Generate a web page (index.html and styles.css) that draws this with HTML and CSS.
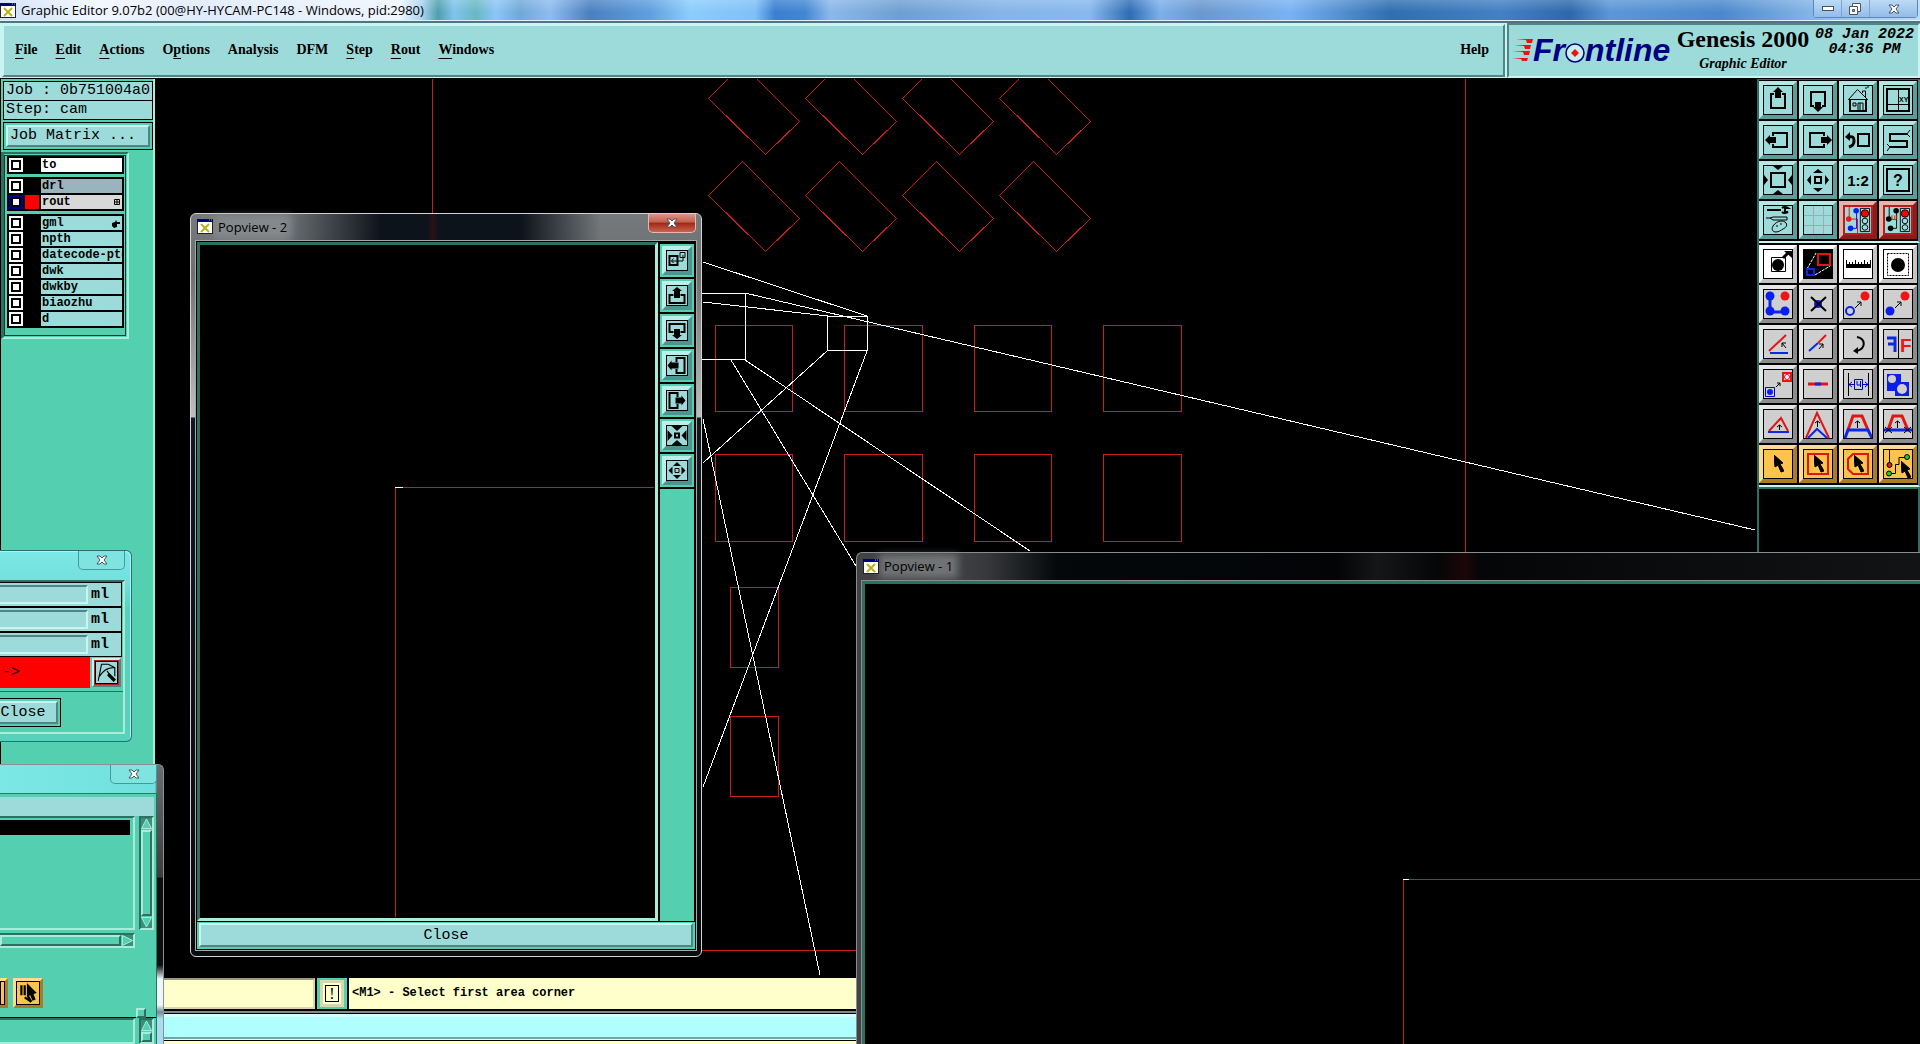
FILE: index.html
```html
<!DOCTYPE html>
<html lang="en">
<head>
  <meta charset="UTF-8">
  <title>Graphic Editor 9.07b2</title>
  <meta name="viewport" content="width=device-width, initial-scale=1.0">
  <link rel="stylesheet" href="styles.css">
</head>
<body>
  <!-- shared shapes -->
  <svg class="defs" aria-hidden="true">
    <symbol id="x-app" viewBox="0 0 16 15">
      <rect width="16" height="15" fill="#222"/>
      <rect x="1" y="0" width="14" height="14" fill="#fff"/>
      <rect x="0" y="0" width="16" height="3" fill="#00007c"/>
      <path d="M12 1h1M14 1h1" stroke="#9ab"/>
      <path d="M4 5l8 8M12 5l-8 8" stroke="#b9b319" stroke-width="2"/>
    </symbol>
    <symbol id="x-close" viewBox="0 0 12 10">
      <path d="M1 1h3l2 2 2-2h3l-3 4 3 4H8L6 7 4 9H1l3-4z" fill="#fff" stroke="#4a5560"/>
    </symbol>
    <symbol id="cursor" viewBox="0 0 10 18">
      <path d="M0 0l9 8-3 1 4 7-3 1-3-7-3 2z" fill="#000"/>
    </symbol>
  </svg>

  <header class="titlebar">
    <svg class="app-icon"><use href="#x-app"/></svg>
    <h1>Graphic Editor 9.07b2 (00@HY-HYCAM-PC148 - Windows, pid:2980)</h1>
    <div class="window-buttons">
      <button aria-label="Minimize"><svg width="12" height="6" viewBox="0 0 12 6"><rect x=".5" y=".5" width="11" height="4" fill="#fff" stroke="#4a5560"/></svg></button>
      <button aria-label="Restore"><svg width="13" height="12" viewBox="0 0 13 12"><path d="M3.500.5h8v8h-8z" fill="#fff" stroke="#4a5560"/><path d="M.5 3.500h8v8h-8z" fill="#fff" stroke="#4a5560"/><path d="M3.500 6.500h2v2h-2z" fill="#7aa5d6" stroke="#4a5560"/></svg></button>
      <button aria-label="Close" class="wide"><svg width="12" height="10"><use href="#x-close"/></svg></button>
    </div>
  </header>

  <div class="top">
    <nav class="menubar">
      <button><u>F</u>ile</button>
      <button><u>E</u>dit</button>
      <button><u>A</u>ctions</button>
      <button>O<u>p</u>tions</button>
      <button>Analysis</button>
      <button>DFM</button>
      <button><u>S</u>tep</button>
      <button><u>R</u>out</button>
      <button><u>W</u>indows</button>
      <button class="help">Help</button>
    </nav>
    <div class="brand">
      <div class="logo">
        <svg width="21" height="24" viewBox="0 0 21 24" fill="#f01010">
          <path d="M4 1h17l-1 4h-5l-1-3zM2 7h17l-1 4h-5l-1-3zM0 13h18l-1 4h-5l-1-3zM0 20h16l-1 3h-5l-1-2z"/>
        </svg>
        <span>Fr</span>
        <svg class="ring" width="20" height="20" viewBox="0 0 20 20">
          <circle cx="10" cy="10" r="9" fill="#c4f0ee" stroke="#00007c" stroke-width="1.500"/>
          <path d="M10 6l4 4-4 4-4-4z" fill="#f01010"/>
        </svg>
        <span>ntline</span>
      </div>
      <div class="product">
        <strong>Genesis 2000</strong>
        <em>Graphic Editor</em>
      </div>
      <div class="clock"><span>08 Jan 2022</span><span>04:36 PM</span></div>
    </div>
  </div>

  <main>
    <aside class="layers">
      <div class="job">
        <div>Job : 0b751004a0</div>
        <div>Step: cam</div>
      </div>
      <div class="matrix"><button>Job Matrix ...</button></div>
      <div class="layer-list">
        <div class="layer-group">
          <label class="layer white"><input type="checkbox"><i></i><span>to</span></label>
        </div>
        <div class="layer-group">
          <label class="layer gray"><input type="checkbox"><i></i><span>drl</span></label>
          <label class="layer silver"><input type="checkbox" checked><i></i><span>rout</span>
            <svg width="6" height="6" viewBox="0 0 6 6"><path d="M.5.5h5v5h-5zM3 0v6M0 3h6" fill="none" stroke="#000"/></svg></label>
        </div>
        <div class="layer-group">
          <label class="layer"><input type="checkbox"><i></i><span>gml</span>
            <svg width="8" height="8" viewBox="0 0 8 8"><path d="M0 3l3-1 1-2 1 2h3v2H5v3l-3 1-2-2z"/></svg></label>
          <label class="layer"><input type="checkbox"><i></i><span>npth</span></label>
          <label class="layer"><input type="checkbox"><i></i><span>datecode-pto</span></label>
          <label class="layer"><input type="checkbox"><i></i><span>dwk</span></label>
          <label class="layer"><input type="checkbox"><i></i><span>dwkby</span></label>
          <label class="layer"><input type="checkbox"><i></i><span>biaozhu</span></label>
          <label class="layer"><input type="checkbox"><i></i><span>d</span></label>
        </div>
      </div>
    </aside>

    <section class="canvas">
      <svg width="1602" height="899" viewBox="155 79 1602 899" fill="none" shape-rendering="crispEdges">
        <defs>
          <path id="slot" d="M708.500 98.500L742.500 64.500L799.500 121.500L765.500 154.500z"/>
          <g id="slots"><use href="#slot"/><use href="#slot" x="97"/><use href="#slot" x="194"/><use href="#slot" x="291"/></g>
        </defs>
        <g stroke="#c81e1e">
          <path d="M432.500 79V950.500H1465.500V79"/>
          <use href="#slots"/>
          <use href="#slots" y="97"/>
          <path d="M715.500 325.500h77v86h-77zM844.500 325.500h78v86h-78zM974.500 325.500h77v86h-77zM1103.500 325.500h78v86h-78z"/>
          <path d="M715.500 454.500h77v87h-77zM844.500 454.500h78v87h-78zM974.500 454.500h77v87h-77zM1103.500 454.500h78v87h-78z"/>
          <path d="M730.500 587.500h48v80h-48zM730.500 716.500h48v80h-48z"/>
        </g>
        <g stroke="#fff">
          <path d="M690 293.500H745.500V359.500H690M827.500 316.500h40v34h-40z"/>
          <path d="M703 262L867 316M703 302L828 316M745 293L1755 530"/>
          <path d="M745 360L1030 551M731 360L856 566M827 351L703 463M867 351L703 787M703 419L820 975"/>
        </g>
      </svg>
    </section>

    <aside class="toolbox">
      <div class="tools">
        <button aria-label="Pan up"><svg viewBox="0 0 28 28"><path d="M10 8H7v14h14V8h-3" class="w2"/><path d="M14 1l5 5h-2v6h-6V6H9z" class="f"/></svg></button>
        <button aria-label="Pan down"><svg viewBox="0 0 28 28"><path d="M10 20H7V6h14v14h-3" class="w2"/><path d="M14 26l5-5h-2v-5h-6v5H9z" class="f"/></svg></button>
        <button aria-label="Home"><svg viewBox="0 0 28 28"><path d="M4.500 13.500l9-10 10 10z M18.500 7V5h3v6M9 17h3v3H9zM14 25v-8h5v8M16 17v8"/><path d="M6 13v12h16V13" class="w2"/><path d="M22 1v2M24 0v2"/></svg></button>
        <button aria-label="Snap"><svg viewBox="0 0 28 28"><path d="M3 3h22v22H3z" class="w2"/><path d="M14.500 3v22M3 18.500h22"/><text x="15" y="16" font-size="7">XY</text></svg></button>
        <button aria-label="Pan left"><svg viewBox="0 0 28 28"><path d="M9 10V7h14v14H9v-3" class="w2"/><path d="M1 14l5-5v2h6v6H6v2z" class="f"/></svg></button>
        <button aria-label="Pan right"><svg viewBox="0 0 28 28"><path d="M20 10V7H6v14h14v-3" class="w2"/><path d="M28 14l-5-5v2h-6v6h6v2z" class="f"/></svg></button>
        <button aria-label="Previous view"><svg viewBox="0 0 28 28"><path d="M14 8h11v12H14z" class="w2"/><path d="M4 11c5-1 6 0 6 4s-2 5-5 6" class="w3"/><path d="M1 11l5-5v9z" class="f"/></svg></button>
        <button aria-label="Serpentine"><svg viewBox="0 0 28 28"><path d="M23 8H6v7h17v6H6" class="w2"/><path d="M26 4l-3 4 3 3M3 18l3 3-3 4"/></svg></button>
        <button aria-label="Zoom in"><svg viewBox="0 0 28 28"><path d="M7 7h14v14H7z" class="w2"/><path d="M9 0h10l-5 4zM9 28h10l-5-4zM0 9v10l4-5zM28 9v10l-4-5z" class="f"/></svg></button>
        <button aria-label="Zoom out"><svg viewBox="0 0 28 28"><path d="M11 11h6v6h-6z" class="w2"/><path d="M14 3l5 4H9zM14 26l5-4H9zM3 14l4-5v10zM25 14l-4-5v10z" class="f"/></svg></button>
        <button aria-label="One to two"><svg viewBox="0 0 28 28"><text x="14" y="20" font-size="15" text-anchor="middle">1:2</text></svg></button>
        <button aria-label="Query"><svg viewBox="0 0 28 28"><path d="M3 3h22v22H3z" class="w2"/><text x="14" y="20" font-size="16" text-anchor="middle">?</text></svg></button>
        <button aria-label="Settings"><svg viewBox="0 0 28 28"><path d="M3 4h14M18 2c3-2 6 0 6 0h-3v4h3s-4 2-6 0" class="w2"/><path d="M2 12h4l3-1h14v3H9l-3-2M9 20c4-6 11-6 13-3s-1 5-3 6-4 3-7 3-5-2-3-6zM12 20h2M16 18h2"/></svg></button>
        <button aria-label="Grid"><svg viewBox="0 0 28 28"><path d="M9.500 0v28M19.500 0v28M0 9.500h28M0 19.500h28" stroke="#a3a9ae"/></svg></button>
        <button aria-label="Net color" class="alert"><svg viewBox="0 0 28 28"><path d="M16.500 1.500h10v25h-10z"/><circle cx="21.500" cy="7" r="4" fill="#f00"/><circle cx="21.500" cy="15" r="3"/><circle cx="21.500" cy="22" r="3"/><path d="M4.500 0v13h9v15" stroke="#f00"/><circle cx="4" cy="13" r="3" class="red"/><path d="M12.500 4v19H6" stroke="#00f"/><circle cx="12" cy="4" r="3" class="blue"/><circle cx="6" cy="23" r="3" class="blue"/></svg></button>
        <button aria-label="Net check" class="alert"><svg viewBox="0 0 28 28"><path d="M16.500 1.500h10v25h-10z"/><circle cx="21.500" cy="7" r="4" fill="#f00"/><circle cx="21.500" cy="15" r="3"/><circle cx="21.500" cy="22" r="3"/><path d="M4.500 0v13M12.500 4v19H6"/><path d="M5 13.500h7M7.500 9v4M10.500 9v4M12.500 9v4" stroke="#f00"/><circle cx="4" cy="13" r="3" class="f"/><circle cx="12" cy="4" r="3" class="f"/><circle cx="6" cy="23" r="3" class="f"/></svg></button>
      </div>
      <div class="tools edit">
        <button aria-label="Move" class="paper"><svg viewBox="0 0 28 28"><path d="M7.500 7.500h14v14h-14z"/><circle cx="14" cy="15" r="6" class="f"/><path d="M19 8l5-5" class="w3"/><path d="M20 1h8v7z" class="f"/></svg></button>
        <button aria-label="Popview" class="paper dark"><svg viewBox="0 0 28 28"><path d="M3 19l9-16M11 25l15-9" stroke="#fff" stroke-dasharray="3 1"/><path d="M14 4h12v11H14z" class="w2 sr"/><path d="M3 19h7v6H3z" class="w2 sb"/></svg></button>
        <button aria-label="Measure" class="paper"><svg viewBox="0 0 28 28"><path d="M2 14h25v4H2z" class="f"/><path d="M2.500 10v5M5.500 12v3M8.500 12v3M11.500 10v5M14.500 12v3M17.500 12v3M20.500 10v5M23.500 12v3M26.500 10v5"/></svg></button>
        <button aria-label="Select feature" class="paper"><svg viewBox="0 0 28 28"><path d="M3.500 3.500h21v22h-21z" stroke-dasharray="2 1"/><circle cx="14" cy="15" r="7" class="f"/></svg></button>
        <button aria-label="Add polyline"><svg viewBox="0 0 28 28"><path d="M6 6v16h15" class="w3 sb"/><circle cx="6" cy="6" r="4.500" class="blue"/><circle cx="6" cy="21" r="4.500" class="blue"/><circle cx="21" cy="21" r="4.500" class="blue"/><circle cx="21" cy="6" r="4.500" class="red"/></svg></button>
        <button aria-label="Delete"><svg viewBox="0 0 28 28"><circle cx="14" cy="14" r="4" class="blue"/><path d="M7 7l15 14M22 7L7 21" class="w2"/></svg></button>
        <button aria-label="Copy to"><svg viewBox="0 0 28 28"><circle cx="6" cy="21" r="4" class="w2 sb"/><circle cx="21" cy="6" r="4.500" class="red"/><path d="M11 18l6-6M13 12h4v4"/></svg></button>
        <button aria-label="Move to"><svg viewBox="0 0 28 28"><circle cx="6" cy="21" r="4.500" class="blue"/><circle cx="21" cy="6" r="4.500" class="red"/><path d="M11 18l6-6M13 12h4v4"/></svg></button>
        <button aria-label="Rotate"><svg viewBox="0 0 28 28"><path d="M5 21L22 5" class="w2 sr"/><path d="M6 23h18" class="w2 sb"/><path d="M22 18l-4-5M18 17v-4h4"/></svg></button>
        <button aria-label="Stretch line"><svg viewBox="0 0 28 28"><path d="M5 21l9-8" class="w2 sb"/><path d="M14 13l8-8" class="w2 sr"/><path d="M15 19l4-5M15 14h4v4"/></svg></button>
        <button aria-label="Turn"><svg viewBox="0 0 28 28"><path d="M13 7c9 2 9 11 0 14" class="w2"/><path d="M9 21l5-4v7z" class="f"/></svg></button>
        <button aria-label="Mirror"><svg viewBox="0 0 28 28"><path d="M14.500 0v28"/><path d="M3 8h8v14M4 14h7" class="w3 sb"/><text x="16" y="22" font-size="19" class="red">F</text></svg></button>
        <button aria-label="Transform"><svg viewBox="0 0 28 28"><path d="M1.500 17.500h9v9h-9z" stroke="#00c"/><circle cx="6" cy="22" r="3" class="blue"/><path d="M19 3h8v8h-8z" fill="#e8d8d8" class="sr w2"/><circle cx="23" cy="7" r="2.500" fill="#fff" stroke="#e41414"/><path d="M12 17l4-4M13 13h3v3"/></svg></button>
        <button aria-label="Break line"><svg viewBox="0 0 28 28"><path d="M4 14h20" class="w3 sr"/><path d="M11 14h6" class="w3 sb"/></svg></button>
        <button aria-label="Spacing"><svg viewBox="0 0 28 28"><path d="M4.500 3v23M24.500 3v23"/><path d="M10.500 9.500h8v10h-8zM10 14.500H5M8 12l-3 2.500 3 2.500M19 14.500h5M21 12l3 2.500-3 2.500M13 11v4h4M16.500 11v6" stroke="#00c"/></svg></button>
        <button aria-label="Merge"><svg viewBox="0 0 28 28"><path d="M3 4h14v8h8v14H11v-5H3z" class="blue"/><circle cx="8" cy="9" r="4" fill="#cfcfcf" stroke="none"/><circle cx="18" cy="19" r="5" fill="#cfcfcf" stroke="none"/></svg></button>
        <button aria-label="Arc"><svg viewBox="0 0 28 28"><path d="M5 21L17 8l7 13" class="w2 sr"/><path d="M4 22h21" class="w2 sb"/><path d="M15.500 20v-5M13 17l2.500-2 2.500 2"/></svg></button>
        <button aria-label="Raise corner"><svg viewBox="0 0 28 28"><path d="M2 28L13 3l12 25" class="w2 sr"/><path d="M4 28l9-9 10 9" class="w2 sb"/><path d="M13.500 17v-6M11 13l2.500-2 2.500 2"/></svg></button>
        <button aria-label="Raise edge"><svg viewBox="0 0 28 28"><path d="M4 20L9 6h9l6 14" class="w3 sr"/><path d="M1 28l3-8h20l4 8" class="w3 sb"/><path d="M13.500 18v-7M11 13l2.500-2 2.500 2"/></svg></button>
        <button aria-label="Raise cut"><svg viewBox="0 0 28 28"><path d="M4 20L9 6h9l6 14" class="w3 sr"/><path d="M0 20h28" class="w3 sb"/><path d="M1 17l7 6M8 17l-7 6M20 17l7 6M27 17l-7 6M13.500 18v-7M11 13l2.500-2 2.500 2"/></svg></button>
        <button aria-label="Select" class="gold"><svg viewBox="0 0 28 28"><use href="#cursor" x="10" y="5" width="10" height="18"/></svg></button>
        <button aria-label="Select in frame" class="gold"><svg viewBox="0 0 28 28"><path d="M4 4h20v20H4z" class="w2 sr"/><use href="#cursor" x="10" y="5" width="10" height="18"/></svg></button>
        <button aria-label="Select in polygon" class="gold"><svg viewBox="0 0 28 28"><path d="M9 4h15v20H9l-5-5V9z" class="w2 sr"/><use href="#cursor" x="10" y="5" width="10" height="18"/></svg></button>
        <button aria-label="Select net" class="gold"><svg viewBox="0 0 28 28"><path d="M5.500 0v15M5 23.500h6.500v-9h3.500v-7h8"/><circle cx="5.500" cy="15" r="2.500" fill="#c22"/><circle cx="5" cy="23.500" r="2.500" fill="#2c2"/><circle cx="23" cy="7" r="2.500" fill="#2c2"/><use href="#cursor" x="17" y="11" width="10" height="18"/></svg></button>
      </div>
      <div class="preview"></div>
    </aside>
  </main>

  <footer>
    <div class="status">
      <input class="entry" type="text" aria-label="Command">
      <div class="bang"><button>!</button></div>
      <output>&lt;M1&gt; - Select first area corner</output>
    </div>
    <div class="strip"></div>
  </footer>

  <section class="window popview one">
    <header>
      <svg class="app-icon"><use href="#x-app"/></svg>
      <h2>Popview - 1</h2>
    </header>
    <div class="view">
      <svg width="1060" height="460" shape-rendering="crispEdges" fill="none">
        <path d="M538.500 460V295.500H1060" stroke="#c81e1e"/>
        <path d="M538 295.500h6" stroke="#fff"/>
      </svg>
    </div>
  </section>

  <section class="window popview two">
    <header>
      <svg class="app-icon"><use href="#x-app"/></svg>
      <h2>Popview - 2</h2>
      <button class="close-red" aria-label="Close window"><svg width="12" height="10"><use href="#x-close"/></svg></button>
    </header>
    <div class="pop-body">
      <div class="pop-row">
        <div class="view">
          <svg width="455" height="673" shape-rendering="crispEdges" fill="none">
            <path d="M195.500 672V242.500H454" stroke="#c81e1e"/>
            <path d="M195 242.500h8" stroke="#fff"/>
          </svg>
        </div>
        <div class="pop-tools">
          <div><button aria-label="Set window"><svg viewBox="0 0 19 19"><path d="M2 5h8v9H2z" class="w2"/><path d="M12.500 1.500h5v5h-5zM15.500 4v6H4M6 7.500L4 10l2 2"/></svg></button></div>
          <div><button aria-label="Up"><svg viewBox="0 0 19 19"><path d="M6 9H2v8h15V9h-4" class="w2"/><path d="M9.500 1l5 4h-2v7h-6V5h-2z" class="f"/></svg></button></div>
          <div><button aria-label="Down"><svg viewBox="0 0 19 19"><path d="M6 11H2V3h15v8h-4" class="w2"/><path d="M9.500 18l5-4h-2V8h-6v6h-2z" class="f"/></svg></button></div>
          <div><button aria-label="Left"><svg viewBox="0 0 19 19"><path d="M9 6V2h8v15H9v-4" class="w2"/><path d="M0 9.500l4-5v2h7v6H4v2z" class="f"/></svg></button></div>
          <div><button aria-label="Right"><svg viewBox="0 0 19 19"><path d="M10 6V2H2v15h8v-4" class="w2"/><path d="M18 9.500l-4-5v2H8v6h6v2z" class="f"/></svg></button></div>
          <div><button aria-label="In"><svg viewBox="0 0 19 19"><path d="M7.500 7.500h4v4h-4z" class="w2"/><path d="M4 0h11L9.500 5zM4 19h11l-5.500-5zM0 4v11l5-5.500zM19 4v11l-5-5.500z" class="f"/></svg></button></div>
          <div><button aria-label="Out"><svg viewBox="0 0 19 19"><path d="M7.500 7.500h4v4h-4z"/><path d="M9.500 1l4 4h-8zM9.500 18l4-4h-8zM1 9.500l4-4v8zM18 9.500l-4-4v8z" class="f"/></svg></button></div>
        </div>
      </div>
      <div class="pop-close"><button>Close</button></div>
    </div>
  </section>

  <section class="window dialog measure">
    <header><button class="close-glass" aria-label="Close window"><svg width="12" height="10"><use href="#x-close"/></svg></button></header>
    <div class="dialog-body">
      <label class="field"><input type="text"><span>ml</span></label>
      <label class="field"><input type="text"><span>ml</span></label>
      <label class="field"><input type="text"><span>ml</span></label>
      <div class="result">
        <output>-&gt;</output>
        <button aria-label="Pick"><svg viewBox="0 0 19 19"><path d="M2 17L5 2h6l6 3v8M3 13c3-4 6-8 14-8M10 8l2 3"/><path d="M11 11l6 6" class="w3"/></svg></button>
      </div>
      <div class="actions"><div><button>Close</button></div></div>
    </div>
  </section>

  <section class="window dialog list">
    <header><button class="close-glass" aria-label="Close window"><svg width="12" height="10"><use href="#x-close"/></svg></button></header>
    <div class="dialog-body">
      <div class="band"></div>
      <div class="scroller">
        <div class="listbox"><div class="selected"></div></div>
        <div class="vbar">
          <svg width="11" height="11" viewBox="0 0 11 11"><path d="M5.500 1l5 9.500H.5z"/></svg>
          <i></i>
          <svg width="11" height="11" viewBox="0 0 11 11"><path d="M.5.5h10l-5 9.500z"/></svg>
        </div>
      </div>
      <div class="hbar"><i></i><svg width="11" height="11" viewBox="0 0 11 11"><path d="M.5.5l10 5-10 5z"/></svg></div>
      <div class="gold-row">
        <button class="gold" aria-label="Select one"><svg viewBox="0 0 20 20"></svg></button>
        <button class="gold" aria-label="Select many"><svg viewBox="0 0 20 20"><path d="M4 3v9M7 3v9M7 14l6 4M10 13l3 5" class="w2"/><path d="M9 1l9 9-3 1 2 5-3 1-2-5-3 2z" class="f"/></svg></button>
      </div>
      <div class="scroller lower">
        <div class="listbox"></div>
        <div class="vbar">
          <svg width="11" height="11" viewBox="0 0 11 11"><path d="M5.500 1l5 9.500H.5z"/></svg>
          <i></i>
        </div>
      </div>
      <div class="sash"></div>
    </div>
  </section>
</body>
</html>
```
FILE: styles.css
```css
:root {
  --face: #9cdbda;
  --teal: #54cfb0;
  --teal-light: #a8ecd9;
  --teal-dark: #2f6f62;
  --light: #c8f4f2;
  --shade: #4f8584;
  --mono: "Liberation Mono", monospace;
  --ui: "Open Sans", sans-serif;
}
* {
  box-sizing: border-box;
}
body {
  margin: 0;
  height: 100vh;
  display: flex;
  flex-direction: column;
  overflow: hidden;
  position: relative;
  background: #000;
  color: #000;
  font-family: var(--mono);
}
button, input {
  font: inherit;
  color: inherit;
  margin: 0;
  padding: 0;
  border-radius: 0;
}
h1, h2 {
  margin: 0;
  font: 13px/16px var(--ui);
}
svg {
  display: block;
  flex: none;
}
.defs {
  position: absolute;
  width: 0;
  height: 0;
}
.app-icon {
  width: 16px;
  height: 15px;
}

/* icon strokes */
button svg {
  fill: none;
  stroke: #000;
  overflow: hidden;
}
button svg text {
  font-family: "Liberation Sans", sans-serif;
  font-weight: bold;
  fill: #000;
  stroke: none;
}
button svg .w2 { stroke-width: 2; }
button svg .w3 { stroke-width: 3; }
button svg .f { fill: #000; stroke: none; }
button svg .red { fill: #f01414; stroke: none; }
button svg .blue { fill: #0a1eee; stroke: none; }
button svg .sr { stroke: #e41414; }
button svg .sb { stroke: #0a28e6; }

/* main window */
.titlebar {
  height: 21px;
  display: flex;
  align-items: center;
  gap: 5px;
  border-bottom: 1px solid #dff0ff;
  background:
    linear-gradient(#ffffff30, #ffffff00 60%),
    linear-gradient(90deg, #cfe0f8 0, #f2f7fe 100px, #dfeafc 200px, #eef6fd 400px, #a9d3f0 422px, #4f9fae 438px, #7fc4ec 454px, #68b8c4 476px, #8cc6f8 496px, #6fa9d8 520px, #8ebcf0 550px, #4a80c0 590px, #5f9fe0 650px, #8ccdfc 690px, #7fc0f8 755px, #3a7fd0 775px, #4287d4 805px, #8ab8ea 830px, #6f9fd2 900px, #85b4e8 1000px, #87b8ee 1090px, #2f6cb4 1130px, #7cb0ec 1160px, #6a98ce 1200px, #79b2f4 1290px, #2f6eb0 1390px, #4380c4 1500px, #2e68ac 1570px, #5b97d8 1610px, #4a88cc 1720px, #9cc8f2 1850px, #b9dcf8);
}
.titlebar .window-buttons {
  margin-left: auto;
  margin-right: 2px;
  align-self: flex-start;
  display: flex;
  height: 18px;
  border: 1px solid #5f87b4;
  border-top: 0;
  border-radius: 0 0 4px 4px;
  background: #a8ccf0;
}
.window-buttons button {
  width: 28px;
  border: 0;
  border-right: 1px solid #7fa5cf;
  background: linear-gradient(#bcdaf5, #93bce8);
  display: flex;
  align-items: center;
  justify-content: center;
}
.window-buttons .wide {
  width: 47px;
  border-right: 0;
}
.top {
  display: flex;
  height: 57px;
  border-top: 2px solid #4f7484;
  background: var(--light);
}
.menubar {
  flex: 1;
  display: flex;
  align-items: center;
  gap: 18px;
  margin: 1px 2px 1px 2px;
  padding: 0 14px 2px 11px;
  background: var(--face);
  border: 2px solid;
  border-color: var(--light) var(--shade) var(--shade) var(--light);
}
.menubar button {
  border: 0;
  background: none;
  font: bold 14px/20px "Liberation Serif", serif;
}
.menubar u {
  text-underline-offset: 4px;
}
.menubar .help {
  margin-left: auto;
}
.brand {
  width: 413px;
  display: flex;
  background: var(--face);
  border: solid;
  border-width: 2px;
  border-color: var(--shade) var(--light) var(--light) var(--shade);
  padding-left: 3px;
}
.logo {
  display: flex;
  align-items: center;
  width: 163px;
  padding-bottom: 2px;
  font: italic bold 32px/36px "Liberation Sans", sans-serif;
  color: #000080;
}
.logo .ring {
  margin-top: 6px;
}
.product {
  width: 136px;
  display: flex;
  flex-direction: column;
  align-items: center;
  font-family: "Liberation Serif", serif;
  white-space: nowrap;
}
.product strong {
  font-size: 24px;
  line-height: 28px;
}
.product em {
  font-size: 14px;
  line-height: 22px;
  font-weight: bold;
}
.clock {
  flex: 1;
  display: flex;
  flex-direction: column;
  align-items: center;
  padding-top: 2px;
  font: italic bold 15px/15px var(--mono);
}
main {
  flex: 1;
  min-height: 0;
  display: flex;
  border-top: 1px solid #000;
}
.canvas {
  flex: 1;
  min-width: 0;
  overflow: hidden;
}

/* layer panel */
.layers {
  width: 155px;
  background: var(--teal);
  border-right: 2px solid var(--teal-light);
  border-left: 1px solid #000;
  font: 15px/18px var(--mono);
}
.job {
  margin: 2px 0 2px 2px;
  border: 1px solid #000;
  background: var(--face);
}
.job div {
  height: 18px;
  padding-left: 2px;
  white-space: nowrap;
}
.job div + div {
  border-top: 1px solid #000;
  height: 19px;
}
.matrix {
  margin-left: 2px;
  padding: 2px;
  border: 1px solid #000;
}
.matrix button {
  width: 100%;
  height: 22px;
  padding-left: 2px;
  text-align: left;
  background: var(--face);
  border: 2px solid;
  border-color: var(--light) var(--shade) var(--shade) var(--light);
}
.layer-list {
  width: 128px;
  height: 187px;
  margin-top: 2px;
  padding: 2px 3px 0 3px;
  border: solid;
  border-width: 2px 2px 2px 3px;
  border-color: var(--teal-dark) var(--teal-light) var(--teal-light) var(--teal-dark);
  outline: 1px solid #143c34;
  outline-offset: -4px;
  display: flex;
  flex-direction: column;
  gap: 3px;
}
.layer-group {
  background: #000;
  padding: 2px;
  display: flex;
  flex-direction: column;
  gap: 2px;
}
.layer {
  display: flex;
  gap: 2px;
  height: 14px;
  position: relative;
  font: bold 12px/14px var(--mono);
}
.layer input {
  appearance: none;
  width: 14px;
  height: 14px;
  background: #fff;
  border: 2px solid #fff;
  box-shadow: inset 0 0 0 2px #000;
}
.layer input:checked {
  border-color: #00008c;
}
.layer i {
  width: 14px;
  background: #000;
}
.layer input:checked + i {
  background: #f00;
}
.layer span {
  flex: 1;
  min-width: 0;
  padding-left: 1px;
  overflow: hidden;
  white-space: nowrap;
  background: var(--face);
}
.layer svg {
  position: absolute;
  right: 2px;
  top: 4px;
}
.layer.white span { background: #fff; }
.layer.gray span { background: #9ab4bd; }
.layer.silver span { background: #d8d8d8; }

/* right toolbox */
.toolbox {
  width: 163px;
  display: flex;
  flex-direction: column;
  border-left: 2px solid var(--teal-dark);
  border-top: 1px solid var(--teal-dark);
}
.tools {
  display: grid;
  grid-template-columns: repeat(4, 38px);
  grid-auto-rows: 38px;
  gap: 2px;
  padding: 1px 0 2px;
  border-bottom: 2px solid var(--light);
  border-right: 2px solid var(--shade);
}
.tools.edit {
  padding-top: 2px;
}
.tools button {
  background: var(--face);
  border: 4px solid;
  border-color: #b4e8e4 #5d9c98 #5d9c98 #b4e8e4;
}
.tools svg, .pop-tools svg, .gold-row svg, .result svg {
  border: 1px solid #000;
  width: 100%;
  height: 100%;
}
.tools .alert {
  border-color: #e4b4ac #8c1c1c #8c1c1c #e4b4ac;
  box-shadow: inset 0 0 0 1px #c03030;
}
.tools .alert svg {
  border: 2px solid #b81c1c;
}
.edit button {
  background: #cfcfcf;
  border-color: #e6e6e6 #8c8c8c #8c8c8c #e6e6e6;
}
.edit .paper {
  background: #fff;
  border-color: #fff #c4c4c4 #c4c4c4 #fff;
}
.edit .dark svg {
  background: #000;
}
.edit .gold, .gold-row .gold {
  background: #fcc44c;
  border-color: #fbdc96 #a87c28 #a87c28 #fbdc96;
}
.preview {
  flex: 1;
  border: 1px solid var(--teal-dark);
  border-width: 2px 2px 2px 0;
}

/* status lines */
footer {
  font: bold 12px/31px var(--mono);
}
.status {
  display: flex;
  height: 31px;
  background: #ffffcb;
}
.entry {
  width: 315px;
  background: #ffffcb;
  border: 2px solid;
  border-color: #9c9c78 #d8d8ac #d8d8ac #9c9c78;
}
.bang {
  width: 34px;
  padding: 2px 3px;
  background: var(--teal);
  border: solid #000;
  border-width: 0 2px;
}
.bang button {
  width: 100%;
  height: 27px;
  background: #ffffcb;
  border: 3px solid #d8d8ac;
  font: 16px/18px "Liberation Serif", serif;
  outline: 1px solid #000;
  outline-offset: -6px;
}
.status output {
  padding-left: 3px;
}
.strip {
  height: 35px;
  border-top: 2px solid #000;
  background: linear-gradient(#808c8c 2px, #000 2px 3px, #d4ffff 3px 6px, #b0ffff 6px 26px, #6ca8a8 26px 28px, #e0ffff 28px 29px, #000 29px 30px, #ffffcb 30px);
}

/* floating windows */
.window {
  position: absolute;
  display: flex;
  flex-direction: column;
}
.window > header {
  display: flex;
  align-items: center;
}
.popview {
  border: 1px solid #d0d4d6;
  border-radius: 6px;
}
.popview > header {
  height: 28px;
  gap: 5px;
  padding-bottom: 2px;
}
.popview h2 {
  line-height: 14px;
  background: #96989a88;
  box-shadow: 0 0 7px 5px #96989a88;
}
.popview .app-icon {
  position: relative;
}
.popview.one {
  left: 856px;
  top: 552px;
  right: 0;
  bottom: 0;
  padding-left: 5px;
  border-color: #8a8c8d;
  border-width: 1px 0 0 1px;
  border-radius: 6px 0 0 0;
  background: linear-gradient(90deg, #404244, #46484a 80px, #36383b 130px, #05080b 200px, #020406 480px, #141617 520px, #050607 580px, #1c0608 609px, #050607 622px, #111314);
}
.one > header {
  padding-left: 1px;
}
.one .view {
  flex: 1;
  overflow: hidden;
  background: #000;
  border: solid var(--teal-dark);
  border-width: 3px 0 0 3px;
  outline: 1px solid #8a8c8d;
}
.popview.two {
  left: 190px;
  top: 213px;
  width: 512px;
  height: 744px;
  padding: 0 5px 6px;
  background: linear-gradient(90deg, #0000 6px, #0000 90px, #0d131b 190px, #0d131b 236px, #2a1016 242px, #0d131b 248px 330px, #0000 410px) 0 0 / 100% 28px no-repeat, linear-gradient(#75797c, #6c7073 60px, #8a8c8e 110px, #bcbec0 203px, #101820 204px, #0a0c10);
}
.two > header {
  padding-left: 1px;
}
.close-red {
  margin-left: auto;
  align-self: flex-start;
  width: 48px;
  height: 19px;
  display: flex;
  align-items: center;
  justify-content: center;
  border: 1px solid #e8b8b0;
  border-top: 0;
  border-radius: 0 0 5px 5px;
  background: linear-gradient(#dc9488, #c4604e 45%, #a02814 50%, #c86450);
}
.pop-body {
  flex: 1;
  display: flex;
  flex-direction: column;
  background: #000;
  padding: 1px 1px 0;
  outline: 1px solid #a4a8aa;
}
.pop-row {
  flex: 1;
  display: flex;
}
.two .view {
  flex: 1;
  border: 3px solid;
  border-color: var(--teal-dark) var(--teal-light) var(--teal-light) var(--teal-dark);
}
.pop-tools {
  width: 37px;
  padding: 2px 1px 0 2px;
  display: flex;
  flex-direction: column;
  gap: 2px;
}
.pop-tools::after {
  content: "";
  flex: 1;
  background: var(--teal);
}
.pop-tools div {
  height: 33px;
  padding: 2px;
  background: var(--teal);
}
.pop-tools button {
  width: 100%;
  height: 29px;
  background: var(--face);
  border: 4px solid;
  border-color: #b8f0ec #4f9490 #4f9490 #b8f0ec;
}
.pop-close {
  margin: 1px 0;
  padding: 1px 2px 2px;
  background: var(--teal);
}
.pop-close button {
  width: 100%;
  height: 24px;
  padding-top: 2px;
  background: var(--face);
  border: 2px solid;
  border-color: var(--light) var(--shade) var(--shade) var(--light);
  font: 15px/18px var(--mono);
}
.dialog {
  left: 0;
  border: 1px solid #2c6f72;
  border-left: 0;
  font: bold 15px/20px var(--mono);
}
.dialog > header {
  justify-content: flex-end;
  align-items: flex-start;
}
.close-glass {
  width: 47px;
  height: 19px;
  display: flex;
  align-items: center;
  justify-content: center;
  background: #7fe4e0;
  border: 1px solid #3f9c9c;
  border-top: 0;
  border-radius: 0 0 5px 5px;
}
.dialog-body {
  flex: 1;
  background: var(--teal);
}
.measure {
  top: 550px;
  width: 132px;
  height: 192px;
  padding-right: 6px;
  padding-bottom: 7px;
  border-radius: 0 6px 6px 0;
  background: linear-gradient(#7ce8e6, #74e0de 30px, #58d0bc 60px);
  box-shadow: inset -1px 1px #a8f4ee;
}
.measure > header, .list > header {
  height: 29px;
}
.measure .dialog-body {
  border: 2px solid;
  border-color: var(--teal-dark) var(--teal-light) var(--teal-light) #000;
  border-left: 0;
}
.field {
  display: flex;
  align-items: center;
  width: 122px;
  height: 25px;
  background: var(--face);
  border: 1px solid #000;
  border-left: 0;
}
.field input {
  width: 88px;
  height: 19px;
  margin-right: 3px;
  background: var(--face);
  border: 2px solid;
  border-color: var(--shade) var(--light) var(--light) var(--shade);
  border-left: 0;
}
.result {
  display: flex;
  height: 35px;
  padding-bottom: 3px;
  border-bottom: 1px solid var(--teal-dark);
}
.result output {
  width: 90px;
  padding-left: 2px;
  background: #f00;
  font: 15px/32px var(--mono);
}
.result button {
  width: 29px;
  height: 29px;
  margin: 1px 0 0 2px;
  padding: 1px;
  background: #b81c1c;
  border: 2px solid;
  border-color: var(--light) var(--shade) var(--shade) var(--light);
}
.result button svg {
  background: var(--face);
}
.actions div {
  width: 61px;
  height: 29px;
  margin-top: 6px;
  padding: 2px 2px 2px 0;
  border: 1px solid #000;
  border-left: 0;
}
.actions button {
  width: 58px;
  height: 23px;
  padding-right: 10px;
  background: var(--face);
  border: 2px solid;
  border-color: var(--light) var(--shade) var(--shade);
  border-left: 0;
  font-weight: normal;
}
.list {
  top: 764px;
  bottom: 0;
  width: 164px;
  padding-right: 6px;
  border-bottom: 0;
  border-radius: 0 6px 0 0;
  border-color: #8a9294;
  background:
    linear-gradient(90deg, #7ce8e6, #70e0dc 155px, #0000 157px) 0 0 / 100% 28px no-repeat,
    linear-gradient(#6a6e70, #3a3c3e 112px, #0c0e10 113px 200px, #eef6fa 214px 240px, #6f8c96 247px, #aadcf0 254px);
}
.list .dialog-body {
  display: flex;
  flex-direction: column;
  padding-top: 3px;
  border-right: 1px solid var(--teal-dark);
  position: relative;
}
.band {
  height: 19px;
  margin-right: 2px;
  background: var(--face);
}
.scroller {
  display: flex;
  gap: 4px;
  height: 114px;
}
.listbox {
  width: 135px;
  padding-top: 2px;
  border: 2px solid;
  border-color: var(--teal-dark) var(--teal-light) var(--teal-light);
  border-left: 0;
}
.selected {
  width: 130px;
  height: 15px;
  background: #000;
}
.vbar {
  width: 15px;
  display: flex;
  flex-direction: column;
  align-items: center;
  gap: 1px;
  border: 2px solid;
  border-color: var(--teal-dark) var(--teal-light) var(--teal-light) var(--teal-dark);
}
.vbar i, .hbar i {
  flex: 1;
  width: 11px;
  border: 2px solid;
  border-color: var(--teal-light) var(--teal-dark) var(--teal-dark) var(--teal-light);
}
.vbar svg, .hbar svg {
  fill: var(--teal);
  stroke: var(--teal-light);
  background: #3b8f7c;
}
.hbar {
  display: flex;
  align-items: center;
  gap: 1px;
  width: 135px;
  height: 15px;
  margin-top: 3px;
  border: 2px solid;
  border-color: var(--teal-dark) var(--teal-light) var(--teal-light);
  border-left: 0;
}
.hbar i {
  height: 11px;
}
.gold-row {
  display: flex;
  gap: 5px;
  margin: 30px 0 9px;
}
.gold-row .gold {
  width: 30px;
  height: 30px;
  border: 3px solid;
  border-color: #fbdc96 #a87c28 #a87c28 #fbdc96;
}
.gold-row .gold:first-child {
  width: 8px;
  border-left: 0;
}
.lower {
  flex: 1;
  height: auto;
  border-top: 1px solid #000;
}
.sash {
  position: absolute;
  right: 10px;
  bottom: 26px;
  width: 10px;
  height: 10px;
  background: var(--teal);
  border: 2px solid;
  border-color: var(--teal-light) var(--teal-dark) var(--teal-dark) var(--teal-light);
}
```
